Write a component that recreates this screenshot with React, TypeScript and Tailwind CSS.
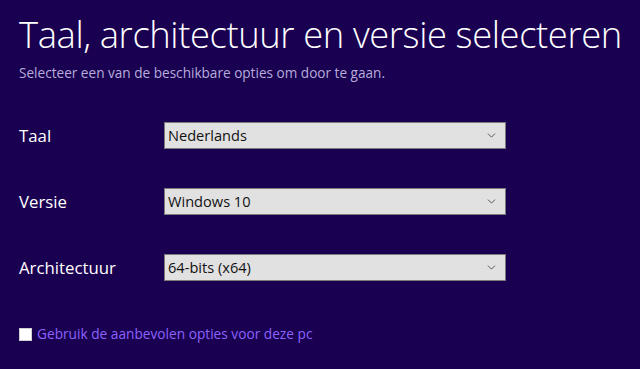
import { ChevronDown } from "lucide-react";

const rows = [
  { label: "Taal", value: "Nederlands" },
  { label: "Versie", value: "Windows 10" },
  { label: "Architectuur", value: "64-bits (x64)" },
];

const App = () => {
  return (
    <div className="w-[640px] h-[369px] bg-[#1a0050] text-white font-['Open_Sans',sans-serif] overflow-hidden">
      <div className="pl-[19px] pt-[12px]">
        <h1 className="text-[36.4px] font-light leading-[44px] tracking-[-0.4px] whitespace-nowrap">
          Taal, architectuur en versie selecteren
        </h1>
        <p className="mt-[9px] text-[13.6px] leading-[16px] text-[#b6addc]">
          Selecteer een van de beschikbare opties om door te gaan.
        </p>

        <div className="mt-[41px] flex flex-col gap-[39px]">
          {rows.map((row) => (
            <div key={row.label} className="flex items-center">
              <span className="w-[145px] text-[16.8px] leading-[20px]">{row.label}</span>
              <div className="w-[342px] h-[27px] bg-[#e1e1e1] border border-[#7a7a7a] flex items-center justify-between pl-[3px] pr-[7px]">
                <span className="text-[14.6px] text-[#111] leading-none">{row.value}</span>
                <ChevronDown className="w-[13px] h-[13px] text-[#444]" strokeWidth={1.6} />
              </div>
            </div>
          ))}
        </div>

        <label className="mt-[45px] flex items-center gap-[5px]">
          <span className="w-[13px] h-[13px] bg-white border border-[#d0d0d0]" />
          <span className="text-[13.7px] leading-[16px] text-[#8b63ff]">
            Gebruik de aanbevolen opties voor deze pc
          </span>
        </label>
      </div>
    </div>
  );
};

export default App;
